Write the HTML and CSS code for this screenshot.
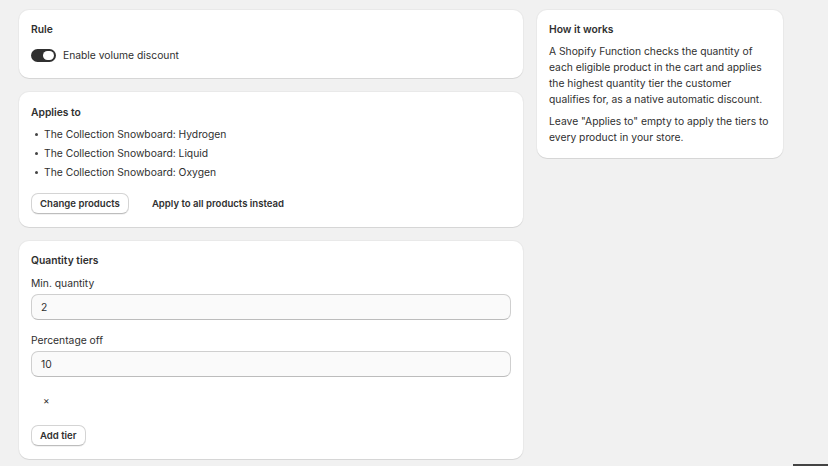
FILE: index.html
```html
<!DOCTYPE html>
<html>
<head>
<meta charset="utf-8">
<link rel="stylesheet" href="styles.css">
</head>
<body>
<div class="page">
  <div class="main">
    <section class="card card-rule">
      <h2 class="card-title">Rule</h2>
      <label class="toggle-row">
        <span class="toggle"><span class="knob"></span></span>
        <span>Enable volume discount</span>
      </label>
    </section>
    <section class="card card-applies">
      <h2 class="card-title">Applies to</h2>
      <ul class="product-list">
        <li>The Collection Snowboard: Hydrogen</li>
        <li>The Collection Snowboard: Liquid</li>
        <li>The Collection Snowboard: Oxygen</li>
      </ul>
      <div class="actions">
        <button class="btn">Change products</button>
        <button class="btn-plain">Apply to all products instead</button>
      </div>
    </section>
    <section class="card">
      <h2 class="card-title">Quantity tiers</h2>
      <div class="field">
        <label class="field-label">Min. quantity</label>
        <div class="input">2</div>
      </div>
      <div class="field">
        <label class="field-label">Percentage off</label>
        <div class="input">10</div>
      </div>
      <div class="remove">×</div>
      <div class="add-row"><button class="btn">Add tier</button></div>
    </section>
  </div>
  <aside class="side">
    <section class="card">
      <h2 class="card-title">How it works</h2>
      <p class="text">A Shopify Function checks the quantity of each eligible product in the cart and applies the highest quantity tier the customer qualifies for, as a native automatic discount.</p>
      <p class="text">Leave "Applies to" empty to apply the tiers to every product in your store.</p>
    </section>
  </aside>
</div>
<div class="corner-bar"></div>
</body>
</html>
```
FILE: styles.css
```css
* { box-sizing: border-box; }
html, body {
  margin: 0;
  height: 100%;
  background: #f1f1f1;
  overflow: hidden;
}
body {
  font-family: Inter, "Noto Sans", sans-serif;
  font-size: 10.3px;
  line-height: 16px;
  color: #303030;
}
.page {
  display: flex;
  align-items: flex-start;
  gap: 14px;
  padding: 10px 0 0 19px;
}
.main {
  width: 504px;
  display: flex;
  flex-direction: column;
  gap: 14px;
}
.side {
  width: 246px;
}
.card {
  background: #fff;
  border-radius: 10px;
  box-shadow: 0 1px 0 rgba(0,0,0,0.08), 0 0 0 1px rgba(0,0,0,0.03);
  padding: 11px 12px 13px;
  display: flex;
  flex-direction: column;
}
.card-rule { padding-bottom: 15px; }
.card-applies { padding-top: 12px; }
.card-title {
  margin: 0;
  font-size: 10.3px;
  font-weight: 600;
  line-height: 16px;
}
.toggle-row {
  display: flex;
  align-items: center;
  gap: 7px;
  margin-top: 10px;
  height: 16px;
}
.toggle {
  width: 25px;
  height: 13px;
  border-radius: 7px;
  background: #303030;
  position: relative;
  display: inline-block;
}
.knob {
  position: absolute;
  right: 2px;
  top: 2px;
  width: 11px;
  height: 9px;
  border-radius: 5px;
  background: #fff;
}
.product-list {
  margin: 5px 0 0;
  padding: 0 0 0 13px;
  list-style: none;
}
.product-list li {
  position: relative;
  line-height: 19px;
}
.product-list li::before {
  content: "";
  position: absolute;
  left: -9px;
  top: 8px;
  width: 3px;
  height: 3px;
  border-radius: 50%;
  background: #444;
}
.actions {
  display: flex;
  align-items: center;
  gap: 11px;
  margin-top: 11px;
}
.btn {
  font: inherit;
  font-weight: 600;
  font-size: 9.6px;
  color: #303030;
  background: #fff;
  border: 1px solid #d4d4d4;
  border-bottom-color: #bdbdbd;
  border-radius: 7px;
  padding: 1px 8px;
  height: 21px;
  line-height: 17px;
  box-shadow: 0 1px 0 rgba(0,0,0,0.05);
}
.btn-plain {
  font: inherit;
  font-weight: 600;
  font-size: 9.6px;
  color: #303030;
  background: none;
  border: none;
  padding: 0 12px;
  height: 21px;
}
.field {
  display: flex;
  flex-direction: column;
  gap: 3px;
  margin-top: 7px;
}
.field + .field {
  margin-top: 12px;
}
.field-label {
  line-height: 16px;
}
.input {
  height: 26px;
  border: 1px solid #cfcfcf;
  border-bottom-color: #bcbcbc;
  border-radius: 7px;
  background: #fafafa;
  padding: 0 9px;
  line-height: 24px;
}
.remove {
  margin: 15px 0 0 12px;
  font-size: 10px;
  line-height: 16px;
}
.add-row { margin-top: 17px; }
.text {
  margin: 6px 0 0;
  line-height: 16px;
}
.card .text + .text { margin-top: 6px; }
.side .card { padding-bottom: 13px; }
.corner-bar {
  position: fixed;
  right: 0;
  bottom: 0;
  width: 35px;
  height: 2px;
  background: #444;
}
```
